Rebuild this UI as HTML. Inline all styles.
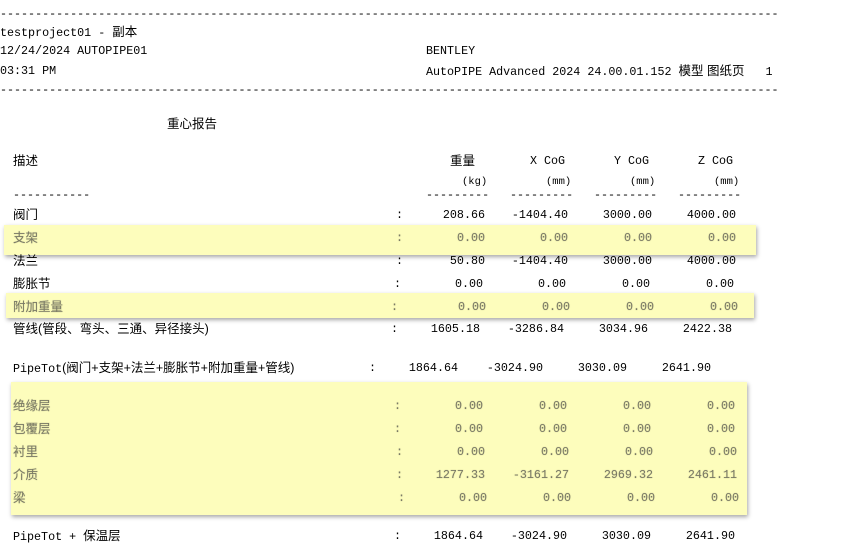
<!DOCTYPE html>
<html><head><meta charset="utf-8"><style>
body{margin:0;width:866px;height:540px;background:#fff;overflow:hidden;position:relative;font-family:"Liberation Mono","Noto Sans CJK SC",monospace;font-size:11.7px;color:#000}
.t{position:absolute;white-space:pre;line-height:14px}
.c{font-family:"Liberation Sans","Noto Sans CJK SC",sans-serif;font-size:12.5px}
.r{position:absolute;white-space:pre;line-height:14px;text-align:right}
.box{position:absolute;background:#fdfdbc;box-shadow:1px 2px 4px rgba(0,0,0,.35)}
.g{color:#7a7a66;text-shadow:0 0 1px rgba(120,120,80,.5)}
</style></head><body>
<div class="t" style="left:0;top:7px">---------------------------------------------------------------------------------------------------------------</div>
<div class="t" style="left:0;top:25px">testproject01 - <span class="c">副本</span></div>
<div class="t" style="left:0;top:44px">12/24/2024 AUTOPIPE01</div>
<div class="t" style="left:0;top:64px">03:31 PM</div>
<div class="t" style="left:426px;top:44px">BENTLEY</div>
<div class="t" style="left:426px;top:64px">AutoPIPE Advanced 2024 24.00.01.152 <span class="c">模型 图纸页</span>   1</div>
<div class="t" style="left:0;top:83px">---------------------------------------------------------------------------------------------------------------</div>
<div class="t c" style="left:167px;top:117px">重心报告</div>
<div class="t c" style="left:13px;top:154px">描述</div>
<div class="t c" style="left:450px;top:154px">重量</div>
<div class="t" style="left:530px;top:154px">X CoG</div>
<div class="t" style="left:614px;top:154px">Y CoG</div>
<div class="t" style="left:698px;top:154px">Z CoG</div>
<div class="t" style="left:462px;top:175px;font-size:10.5px">(kg)</div>
<div class="t" style="left:546px;top:175px;font-size:10.5px">(mm)</div>
<div class="t" style="left:630px;top:175px;font-size:10.5px">(mm)</div>
<div class="t" style="left:714px;top:175px;font-size:10.5px">(mm)</div>
<div class="t" style="left:13px;top:188px">-----------</div>
<div class="t" style="left:426px;top:188px">---------</div>
<div class="t" style="left:510px;top:188px">---------</div>
<div class="t" style="left:594px;top:188px">---------</div>
<div class="t" style="left:678px;top:188px">---------</div>

<div class="box" style="left:4px;top:225px;width:752px;height:30px"></div>
<div class="box" style="left:6px;top:293px;width:748px;height:25px"></div>
<div class="box" style="left:11px;top:382px;width:736px;height:133px"></div>

<div class="t c" style="left:13px;top:208px">阀门</div><div class="t" style="left:396px;top:208px">:</div>
<div class="r" style="right:381px;top:208px">208.66</div><div class="r" style="right:298px;top:208px">-1404.40</div><div class="r" style="right:214px;top:208px">3000.00</div><div class="r" style="right:130px;top:208px">4000.00</div>

<div class="t c g" style="left:13px;top:231px">支架</div><div class="t g" style="left:396px;top:231px">:</div>
<div class="r g" style="right:381px;top:231px">0.00</div><div class="r g" style="right:298px;top:231px">0.00</div><div class="r g" style="right:214px;top:231px">0.00</div><div class="r g" style="right:130px;top:231px">0.00</div>

<div class="t c" style="left:13px;top:254px">法兰</div><div class="t" style="left:396px;top:254px">:</div>
<div class="r" style="right:381px;top:254px">50.80</div><div class="r" style="right:298px;top:254px">-1404.40</div><div class="r" style="right:214px;top:254px">3000.00</div><div class="r" style="right:130px;top:254px">4000.00</div>

<div class="t c" style="left:13px;top:277px">膨胀节</div><div class="t" style="left:394px;top:277px">:</div>
<div class="r" style="right:383px;top:277px">0.00</div><div class="r" style="right:300px;top:277px">0.00</div><div class="r" style="right:216px;top:277px">0.00</div><div class="r" style="right:132px;top:277px">0.00</div>

<div class="t c g" style="left:13px;top:300px">附加重量</div><div class="t g" style="left:391px;top:300px">:</div>
<div class="r g" style="right:380px;top:300px">0.00</div><div class="r g" style="right:296px;top:300px">0.00</div><div class="r g" style="right:212px;top:300px">0.00</div><div class="r g" style="right:128px;top:300px">0.00</div>

<div class="t c" style="left:13px;top:322px">管线(管段、弯头、三通、异径接头)</div><div class="t" style="left:391px;top:322px">:</div>
<div class="r" style="right:386px;top:322px">1605.18</div><div class="r" style="right:302px;top:322px">-3286.84</div><div class="r" style="right:218px;top:322px">3034.96</div><div class="r" style="right:134px;top:322px">2422.38</div>

<div class="t" style="left:13px;top:361px">PipeTot<span class="c">(阀门+支架+法兰+膨胀节+附加重量+管线)</span></div><div class="t" style="left:369px;top:361px">:</div>
<div class="r" style="right:408px;top:361px">1864.64</div><div class="r" style="right:323px;top:361px">-3024.90</div><div class="r" style="right:239px;top:361px">3030.09</div><div class="r" style="right:155px;top:361px">2641.90</div>

<div class="t c g" style="left:13px;top:399px">绝缘层</div><div class="t g" style="left:394px;top:399px">:</div>
<div class="r g" style="right:383px;top:399px">0.00</div><div class="r g" style="right:299px;top:399px">0.00</div><div class="r g" style="right:215px;top:399px">0.00</div><div class="r g" style="right:131px;top:399px">0.00</div>
<div class="t c g" style="left:13px;top:422px">包覆层</div><div class="t g" style="left:394px;top:422px">:</div>
<div class="r g" style="right:383px;top:422px">0.00</div><div class="r g" style="right:299px;top:422px">0.00</div><div class="r g" style="right:215px;top:422px">0.00</div><div class="r g" style="right:131px;top:422px">0.00</div>
<div class="t c g" style="left:13px;top:445px">衬里</div><div class="t g" style="left:396px;top:445px">:</div>
<div class="r g" style="right:381px;top:445px">0.00</div><div class="r g" style="right:297px;top:445px">0.00</div><div class="r g" style="right:213px;top:445px">0.00</div><div class="r g" style="right:129px;top:445px">0.00</div>
<div class="t c g" style="left:13px;top:468px">介质</div><div class="t g" style="left:396px;top:468px">:</div>
<div class="r g" style="right:381px;top:468px">1277.33</div><div class="r g" style="right:297px;top:468px">-3161.27</div><div class="r g" style="right:213px;top:468px">2969.32</div><div class="r g" style="right:129px;top:468px">2461.11</div>
<div class="t c g" style="left:13px;top:491px">梁</div><div class="t g" style="left:398px;top:491px">:</div>
<div class="r g" style="right:379px;top:491px">0.00</div><div class="r g" style="right:295px;top:491px">0.00</div><div class="r g" style="right:211px;top:491px">0.00</div><div class="r g" style="right:127px;top:491px">0.00</div>

<div class="t" style="left:13px;top:529px">PipeTot + <span class="c">保温层</span></div><div class="t" style="left:394px;top:529px">:</div>
<div class="r" style="right:383px;top:529px">1864.64</div><div class="r" style="right:299px;top:529px">-3024.90</div><div class="r" style="right:215px;top:529px">3030.09</div><div class="r" style="right:131px;top:529px">2641.90</div>
</body></html>
